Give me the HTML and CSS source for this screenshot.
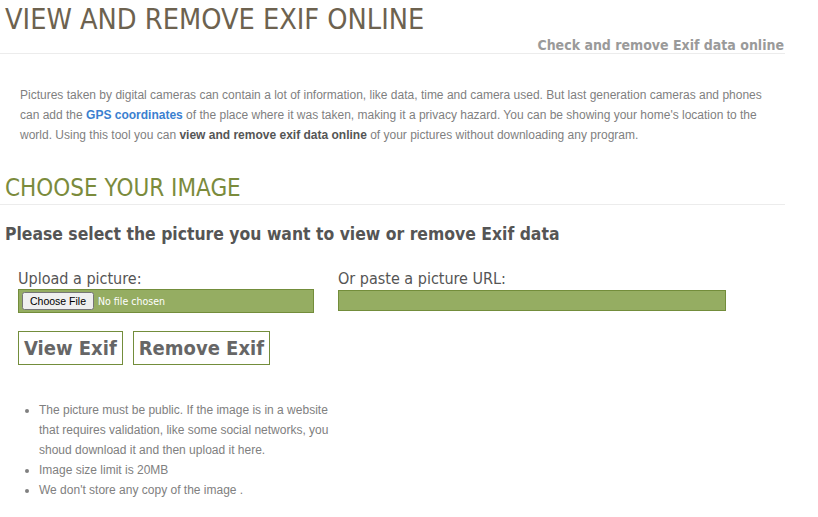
FILE: index.html
```html
<!DOCTYPE html>
<html lang="en">
<head>
    <meta charset="UTF-8">
    <meta name="viewport" content="width=device-width, initial-scale=1.0">
    <title>View and remove Exif online</title>
    <link rel="stylesheet" href="styles.css">
</head>
<body>

    <div class="page">
        <!-- Header -->
        <div class="header">
            <h1>VIEW AND REMOVE EXIF ONLINE</h1>
            <p class="tagline">Check and remove Exif data online</p>
        </div>

        <p class="intro">
            Pictures taken by digital cameras can contain a lot of information, like data, time and camera used. But last generation cameras and phones
            can add the <a href="#">GPS coordinates</a> of the place where it was taken, making it a privacy hazard. You can be showing your home's location to the
            world. Using this tool you can <strong>view and remove exif data online</strong> of your pictures without downloading any program.
        </p>

        <!-- Upload form -->
        <h2>CHOOSE YOUR IMAGE</h2>
        <h3>Please select the picture you want to view or remove Exif data</h3>

        <form class="upload">
            <div class="fields">
                <div class="field">
                    <label for="picFile">Upload a picture:</label>
                    <input type="file" id="picFile" class="file-input">
                </div>
                <div class="field">
                    <label for="picUrl">Or paste a picture URL:</label>
                    <input type="text" id="picUrl" class="url-input">
                </div>
            </div>
            <div class="buttons">
                <input type="submit" class="btn" value="View Exif">
                <input type="submit" class="btn" value="Remove Exif">
            </div>
        </form>

        <ul class="notes">
            <li>The picture must be public. If the image is in a website that requires validation, like some social networks, you shoud download it and then upload it here.</li>
            <li>Image size limit is 20MB</li>
            <li>We don't store any copy of the image .</li>
        </ul>
    </div>

</body>
</html>
```

FILE: styles.css
```css
* {
    margin: 0;
    padding: 0;
    box-sizing: border-box;
}

body {
    background: white;
    font-family: "Liberation Sans", Arial, sans-serif;
}

.page {
    width: 785px;
}

.header {
    border-bottom: 1px solid #ececec;
}

.header h1 {
    font-family: "DejaVu Sans Condensed", "DejaVu Sans", sans-serif;
    font-weight: normal;
    font-size: 28.6px;
    line-height: 36px;
    color: #6d624f;
    padding-left: 5px;
    padding-top: 1px;
}

.header .tagline {
    text-align: right;
    padding-right: 1px;
    font-family: "DejaVu Sans Condensed", "DejaVu Sans", sans-serif;
    font-weight: bold;
    font-size: 14px;
    line-height: 16px;
    color: #9a9a9a;
}

.intro {
    padding: 31px 20px 0 20px;
    font-size: 12px;
    line-height: 20px;
    color: #7f7f7f;
}

.intro a {
    color: #3b7fd0;
    font-weight: bold;
    text-decoration: none;
}

.intro strong {
    color: #555;
}

h2 {
    margin-top: 27px;
    padding-left: 5px;
    font-family: "DejaVu Sans Condensed", "DejaVu Sans", sans-serif;
    font-weight: normal;
    font-size: 24px;
    line-height: 32px;
    color: #7b8b3c;
    border-bottom: 1px solid #ececec;
}

h3 {
    margin-top: 17px;
    padding-left: 5px;
    font-family: "DejaVu Sans Condensed", "DejaVu Sans", sans-serif;
    font-size: 17.4px;
    line-height: 24px;
    color: #555;
}

.upload {
    padding-left: 18px;
    margin-top: 23px;
}

.fields {
    display: flex;
    gap: 24px;
}

.field label {
    display: block;
    font-family: "DejaVu Sans Condensed", "DejaVu Sans", sans-serif;
    font-size: 16px;
    line-height: 19px;
    color: #555;
}

.file-input {
    width: 296px;
    height: 24px;
    margin-top: 1px;
    padding: 2px 3px;
    background: #95ad62;
    border: 1px solid #738d3b;
    color: white;
    font-family: "DejaVu Sans Condensed", "DejaVu Sans", sans-serif;
    font-size: 10.5px;
}

.url-input {
    width: 388px;
    height: 21px;
    margin-top: 2px;
    background: #95ad62;
    border: 1px solid #738d3b;
}

.buttons {
    display: flex;
    gap: 10px;
    margin-top: 18px;
}

.btn {
    height: 34px;
    padding: 0 5px;
    background: white;
    border: 1px solid #738d3b;
    font-family: "DejaVu Sans Condensed", "DejaVu Sans", sans-serif;
    font-weight: bold;
    font-size: 20px;
    color: #666;
    cursor: pointer;
}

.notes {
    width: 330px;
    margin-top: 35px;
    padding-left: 39px;
    font-size: 12px;
    line-height: 20px;
    color: #808080;
}
```
